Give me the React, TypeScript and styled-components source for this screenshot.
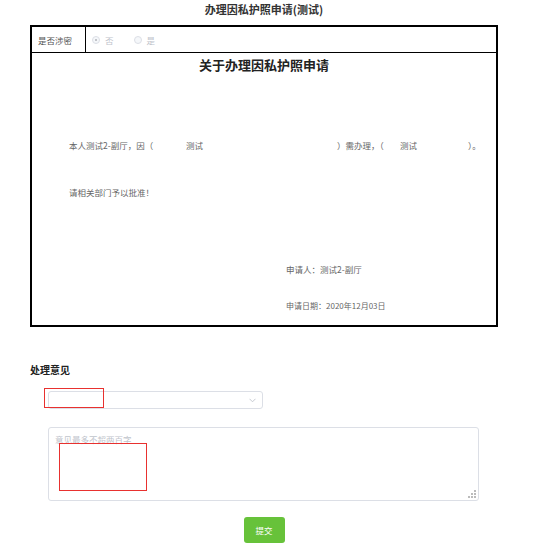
import React from 'react';
import styled, { createGlobalStyle } from 'styled-components';

const Global = createGlobalStyle`
  html, body { margin: 0; padding: 0; background: #fff; }
  body { font-family: "Noto Sans CJK SC", "Noto Sans", sans-serif; }
`;

const Page = styled.div`
  width: 468px;
  padding: 0 49px 0 30px;
`;

const Title = styled.h1`
  margin: 0;
  height: 25px;
  box-sizing: border-box;
  padding-top: 2px;
  font-size: 11px;
  line-height: 14px;
  font-weight: 700;
  color: #333;
  text-align: center;
`;

const FormBox = styled.div`
  border: 2px solid #000;
  height: 302px;
  box-sizing: border-box;
  display: flex;
  flex-direction: column;
`;

const SecretRow = styled.div`
  display: flex;
  height: 26px;
  box-sizing: border-box;
  border-bottom: 1px solid #000;
`;

const LabelCell = styled.div`
  width: 54px;
  box-sizing: border-box;
  border-right: 1px solid #000;
  padding-left: 6px;
  display: flex;
  align-items: center;
  font-size: 8.5px;
  color: #555;
`;

const RadioGroup = styled.div`
  display: flex;
  align-items: center;
  padding-left: 6px;
  gap: 20px;
`;

const RadioItem = styled.label`
  display: flex;
  align-items: center;
  gap: 5px;
  font-size: 8.5px;
  color: #c0c4cc;
`;

const RadioDot = styled.span<{ $checked?: boolean }>`
  width: 8px;
  height: 8px;
  box-sizing: border-box;
  border: 1px solid #dcdfe6;
  border-radius: 50%;
  background: #f5f7fa;
  display: flex;
  align-items: center;
  justify-content: center;
  &::after {
    content: '';
    width: 2px;
    height: 2px;
    border-radius: 50%;
    background: ${(p) => (p.$checked ? '#b0b3b8' : 'transparent')};
  }
`;

const Doc = styled.div`
  flex: 1;
  display: flex;
  flex-direction: column;
  color: #666;
  font-size: 8.5px;
`;

const DocHeading = styled.h2`
  margin: 4px 0 0;
  font-size: 13px;
  line-height: 16px;
  font-weight: 700;
  color: #222;
  text-align: center;
`;

const Para = styled.div<{ $top: number; $indent?: number; $size?: number }>`
  margin-top: ${(p) => p.$top}px;
  padding-left: ${(p) => p.$indent ?? 37}px;
  font-size: ${(p) => p.$size ?? 8.5}px;
  line-height: 12px;
  white-space: nowrap;
  display: flex;
  align-items: center;
`;

const Field = styled.span<{ $w: number; $pad: number }>`
  display: inline-block;
  width: ${(p) => p.$w}px;
  padding-left: ${(p) => p.$pad}px;
  box-sizing: border-box;
`;

const Segment = styled.span<{ $w: number }>`
  display: inline-block;
  width: ${(p) => p.$w}px;
`;

const OpinionTitle = styled.div`
  margin-top: 37px;
  font-size: 10px;
  line-height: 12px;
  font-weight: 700;
  color: #222;
`;

const SelectWrap = styled.div`
  position: relative;
  margin: 15px 0 0 18px;
  width: 215px;
  height: 18px;
  box-sizing: border-box;
  border: 1px solid #dcdfe6;
  border-radius: 3px;
  display: flex;
  align-items: center;
  justify-content: flex-end;
  padding-right: 6px;
`;

const Marker = styled.div<{ $l: number; $t: number; $w: number; $h: number }>`
  position: absolute;
  left: ${(p) => p.$l}px;
  top: ${(p) => p.$t}px;
  width: ${(p) => p.$w}px;
  height: ${(p) => p.$h}px;
  box-sizing: border-box;
  border: 1px solid #e8312f;
  pointer-events: none;
`;

const AreaWrap = styled.div`
  position: relative;
  margin: 18px 0 0 18px;
  width: 431px;
  height: 74px;
`;

const TextArea = styled.textarea`
  width: 100%;
  height: 100%;
  box-sizing: border-box;
  border: 1px solid #dcdfe6;
  border-radius: 3px;
  padding: 5px 6px;
  resize: none;
  outline: none;
  font-family: "Noto Sans CJK SC", "Noto Sans", sans-serif;
  font-size: 8.5px;
  line-height: 12px;
  &::placeholder { color: #c0c4cc; }
`;

const Grip = styled.svg`
  position: absolute;
  right: 3px;
  bottom: 3px;
`;

const ButtonRow = styled.div`
  display: flex;
  justify-content: center;
  margin-top: 16px;
`;

const SubmitButton = styled.button`
  width: 41px;
  height: 26px;
  border: none;
  border-radius: 3px;
  background: #67c23a;
  color: #fff;
  font-family: "Noto Sans CJK SC", "Noto Sans", sans-serif;
  font-size: 8.5px;
  padding: 0;
`;

export default function App() {
  return (
    <>
      <Global />
      <Page>
        <Title>办理因私护照申请(测试)</Title>
        <FormBox>
          <SecretRow>
            <LabelCell>是否涉密</LabelCell>
            <RadioGroup>
              <RadioItem>
                <RadioDot $checked />否
              </RadioItem>
              <RadioItem>
                <RadioDot />是
              </RadioItem>
            </RadioGroup>
          </SecretRow>
          <Doc>
            <DocHeading>关于办理因私护照申请</DocHeading>
            <Para $top={66}>
              <Segment $w={84}>本人测试2-副厅，因（</Segment>
              <Field $w={184} $pad={33}>测试</Field>
              <Segment $w={52}>）需办理，（</Segment>
              <Field $w={79} $pad={11}>测试</Field>
              ）。
            </Para>
            <Para $top={35}>请相关部门予以批准！</Para>
            <Para $top={65} $indent={254}>申请人：测试2-副厅</Para>
            <Para $top={25} $indent={254} $size={8}>申请日期：2020年12月03日</Para>
          </Doc>
        </FormBox>
        <OpinionTitle>处理意见</OpinionTitle>
        <SelectWrap>
          <svg width="7" height="5" viewBox="0 0 7 5">
            <polyline points="0.5,0.8 3.5,3.8 6.5,0.8" fill="none" stroke="#c0c4cc" strokeWidth="0.9" />
          </svg>
          <Marker $l={-5} $t={-4} $w={60} $h={20} />
        </SelectWrap>
        <AreaWrap>
          <TextArea placeholder="意见最多不超两百字" />
          <Grip width="8" height="8" viewBox="0 0 8 8">
            <rect x="6" y="0" width="2" height="2" fill="#bbb" />
            <rect x="3" y="3" width="2" height="2" fill="#bbb" />
            <rect x="6" y="3" width="2" height="2" fill="#bbb" />
            <rect x="0" y="6" width="2" height="2" fill="#bbb" />
            <rect x="3" y="6" width="2" height="2" fill="#bbb" />
            <rect x="6" y="6" width="2" height="2" fill="#bbb" />
          </Grip>
          <Marker $l={11} $t={16} $w={88} $h={48} />
        </AreaWrap>
        <ButtonRow>
          <SubmitButton>提交</SubmitButton>
        </ButtonRow>
      </Page>
    </>
  );
}
